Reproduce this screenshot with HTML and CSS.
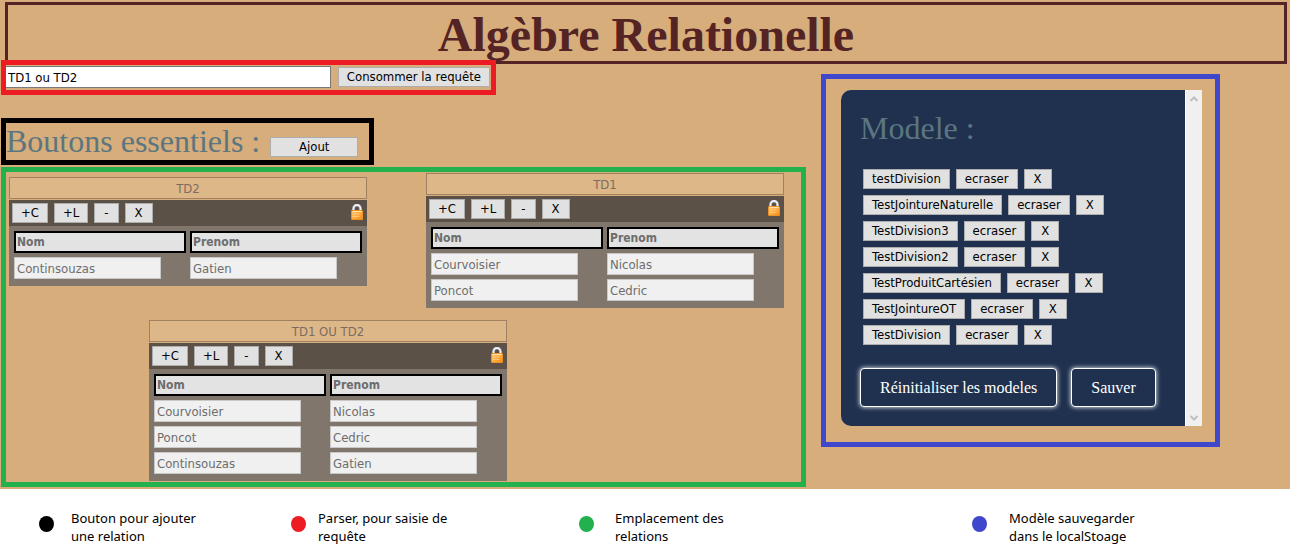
FILE: index.html
```
<!DOCTYPE html>
<html lang="fr">
<head>
<meta charset="utf-8">
<title>Algèbre Relationelle</title>
<link rel="stylesheet" href="styles.css">
</head>
<body>
<svg class="defs" aria-hidden="true">
  <defs>
    <linearGradient id="brass" x1="0" y1="0" x2="1" y2="1">
      <stop offset="0" stop-color="#ffc878"/>
      <stop offset="0.5" stop-color="#ffae45"/>
      <stop offset="1" stop-color="#f58a10"/>
    </linearGradient>
    <symbol id="lock" viewBox="0 0 12 16">
      <path d="M2.500 8V4.500a3.500 3.500 0 0 1 7 0V8" fill="none" stroke="#8f8f90" stroke-width="3"/>
      <path d="M2.500 8V4.500a3.500 3.500 0 0 1 7 0V8" fill="none" stroke="#eef1f6" stroke-width="1.800"/>
      <rect x="0.500" y="6.500" width="11" height="9" rx="0.500" fill="url(#brass)" stroke="#ee9226"/>
      <path d="M1.500 7.500h9" stroke="#ffe0a8"/>
      <path d="M1.500 10h7M1.500 12.500h7" stroke="#ffd596" stroke-opacity="0.600"/>
    </symbol>
  </defs>
</svg>
<div class="app">
  <header class="banner"><h1>Algèbre Relationelle</h1></header>
  <main class="columns">
    <div class="work">
      <form class="frame query">
        <input class="query-text" type="text" aria-label="Requête" value="TD1 ou TD2">
        <button class="btn" type="button">Consommer la requête</button>
      </form>
      <section class="frame essentials">
        <h2>Boutons essentiels :</h2>
        <button class="btn btn-wide" type="button">Ajout</button>
      </section>
      <section class="frame canvas" aria-label="Relations">
        <article class="relation td2">
          <input class="name" type="text" aria-label="Nom de la relation" value="TD2" disabled>
          <div class="tools">
            <button class="btn" type="button">+C</button><button class="btn" type="button">+L</button><button class="btn btn-sign" type="button">-</button><button class="btn btn-sign" type="button">X</button>
            <svg class="lock" role="img" aria-label="Verrou"><use href="#lock"/></svg>
          </div>
          <table>
            <tr><th><input type="text" aria-label="Colonne 1" value="Nom" disabled></th><th><input type="text" aria-label="Colonne 2" value="Prenom" disabled></th></tr>
            <tr><td><input type="text" aria-label="Nom" value="Continsouzas" disabled></td><td><input type="text" aria-label="Prenom" value="Gatien" disabled></td></tr>
          </table>
        </article>
        <article class="relation td1">
          <input class="name" type="text" aria-label="Nom de la relation" value="TD1" disabled>
          <div class="tools">
            <button class="btn" type="button">+C</button><button class="btn" type="button">+L</button><button class="btn btn-sign" type="button">-</button><button class="btn btn-sign" type="button">X</button>
            <svg class="lock" role="img" aria-label="Verrou"><use href="#lock"/></svg>
          </div>
          <table>
            <tr><th><input type="text" aria-label="Colonne 1" value="Nom" disabled></th><th><input type="text" aria-label="Colonne 2" value="Prenom" disabled></th></tr>
            <tr><td><input type="text" aria-label="Nom" value="Courvoisier" disabled></td><td><input type="text" aria-label="Prenom" value="Nicolas" disabled></td></tr>
            <tr><td><input type="text" aria-label="Nom" value="Poncot" disabled></td><td><input type="text" aria-label="Prenom" value="Cedric" disabled></td></tr>
          </table>
        </article>
        <article class="relation union">
          <input class="name" type="text" aria-label="Nom de la relation" value="TD1 OU TD2" disabled>
          <div class="tools">
            <button class="btn" type="button">+C</button><button class="btn" type="button">+L</button><button class="btn btn-sign" type="button">-</button><button class="btn btn-sign" type="button">X</button>
            <svg class="lock" role="img" aria-label="Verrou"><use href="#lock"/></svg>
          </div>
          <table>
            <tr><th><input type="text" aria-label="Colonne 1" value="Nom" disabled></th><th><input type="text" aria-label="Colonne 2" value="Prenom" disabled></th></tr>
            <tr><td><input type="text" aria-label="Nom" value="Courvoisier" disabled></td><td><input type="text" aria-label="Prenom" value="Nicolas" disabled></td></tr>
            <tr><td><input type="text" aria-label="Nom" value="Poncot" disabled></td><td><input type="text" aria-label="Prenom" value="Cedric" disabled></td></tr>
            <tr><td><input type="text" aria-label="Nom" value="Continsouzas" disabled></td><td><input type="text" aria-label="Prenom" value="Gatien" disabled></td></tr>
          </table>
        </article>
      </section>
    </div>
    <aside class="frame models">
      <div class="panel">
        <div class="panel-body">
          <h2>Modele :</h2>
          <ul class="model-list">
            <li><button class="btn" type="button">testDivision</button><button class="btn" type="button">ecraser</button><button class="btn btn-sign" type="button">X</button></li>
            <li><button class="btn" type="button">TestJointureNaturelle</button><button class="btn" type="button">ecraser</button><button class="btn btn-sign" type="button">X</button></li>
            <li><button class="btn" type="button">TestDivision3</button><button class="btn" type="button">ecraser</button><button class="btn btn-sign" type="button">X</button></li>
            <li><button class="btn" type="button">TestDivision2</button><button class="btn" type="button">ecraser</button><button class="btn btn-sign" type="button">X</button></li>
            <li><button class="btn" type="button">TestProduitCartésien</button><button class="btn" type="button">ecraser</button><button class="btn btn-sign" type="button">X</button></li>
            <li><button class="btn" type="button">TestJointureOT</button><button class="btn" type="button">ecraser</button><button class="btn btn-sign" type="button">X</button></li>
            <li><button class="btn" type="button">TestDivision</button><button class="btn" type="button">ecraser</button><button class="btn btn-sign" type="button">X</button></li>
          </ul>
          <div class="actions">
            <button class="glow" type="button">Réinitialiser les modeles</button>
            <button class="glow" type="button">Sauver</button>
          </div>
        </div>
        <div class="scrollbar" aria-hidden="true">
          <svg viewBox="0 0 8 6"><path d="M0.500 5l3.500-3.500 3.500 3.500"/></svg>
          <svg viewBox="0 0 8 6"><path d="M0.500 1l3.500 3.500 3.500-3.500"/></svg>
        </div>
      </div>
    </aside>
  </main>
</div>
<footer class="legend">
  <span class="dot black"></span><p>Bouton pour ajouter<br>une relation</p>
  <span class="dot red"></span><p>Parser, pour saisie de<br>requête</p>
  <span class="dot green"></span><p>Emplacement des<br>relations</p>
  <span class="dot blue"></span><p>Modèle sauvegarder<br>dans le localStoage</p>
</footer>
</body>
</html>
```
FILE: styles.css
```
* {
  box-sizing: border-box;
}

body {
  margin: 0;
  background: #fff;
  color: #000;
  font-family: "Liberation Serif", "Times New Roman", serif;
}

h1,
h2,
p,
ul {
  margin: 0;
  padding: 0;
}

h2 {
  color: #5b7680;
  font-size: 32px;
  font-weight: 400;
  line-height: 37px;
}

input,
.btn {
  font-family: "DejaVu Sans Condensed", "DejaVu Sans", Tahoma, sans-serif;
  font-size: 13px;
}

.defs {
  position: absolute;
  width: 0;
  height: 0;
}

.app {
  padding: 2px 0;
  background: #d6ad7b;
}

.banner {
  margin: 0 3px 0 5px;
  padding-top: 4px;
  border: 3px solid #542324;
  color: #542324;
  text-align: center;
}

.banner h1 {
  font-size: 48px;
  line-height: 52px;
}

.columns {
  display: grid;
  grid-template-columns: minmax(0, 805fr) minmax(0, 399fr);
  align-items: start;
  gap: 15px;
  margin-top: -4px;
  padding: 0 70px 0 1px;
}

.frame {
  position: relative;
  border: 5px solid;
}

.work {
  display: flex;
  flex-direction: column;
  align-items: flex-start;
}

.btn {
  height: 20px;
  padding: 0 8px;
  border: 1px solid #adadad;
  background: #e1e1e1;
  color: #000;
  line-height: 18px;
  white-space: nowrap;
}

.btn-sign {
  padding: 0 9px;
}

.btn-wide {
  width: 88px;
}

.query {
  display: flex;
  align-items: center;
  gap: 7px;
  width: 495px;
  padding: 1px 1px 2px 0;
  border-color: #ed1c24;
}

.query-text {
  flex: 1;
  min-width: 0;
  height: 22px;
  padding: 0 2px;
  border: 1px solid #7a7a7a;
  border-left: 0;
  background: #fff;
}

.essentials {
  display: flex;
  align-items: flex-end;
  gap: 10px;
  margin: 23px 0 2px;
  padding-right: 11px;
  border-color: #000;
}

.essentials .btn {
  margin-bottom: 3px;
}

.canvas {
  width: 100%;
  height: 320px;
  border-color: #22b14c;
}

.relation {
  position: absolute;
  width: 358px;
  background: #80766c;
}

.td2 {
  left: 3px;
  top: 5px;
}

.td1 {
  left: 420px;
  top: 1px;
}

.union {
  left: 143px;
  top: 148px;
}

.relation input {
  display: block;
  width: 147px;
  height: 22px;
  padding: 0 2px;
  border: 1px solid #c8c8c8;
  border-radius: 0;
  background: #f0f0f0;
  color: #6d6d6d;
}

.relation .name {
  width: 100%;
  border-color: #a08262;
  background: #deb788;
  color: #7c6c60;
  text-align: center;
}

.relation th input {
  width: 172px;
  padding: 0 1px;
  border: 2px solid #000;
  background: #e3e3e3;
  font-size: 12px;
  font-weight: 700;
}

.tools {
  display: flex;
  align-items: center;
  gap: 6px;
  height: 27px;
  padding: 0 4px 0 3px;
  border-top: 1px solid #d6ad7b;
  background: #5b5147;
}

.lock {
  width: 12px;
  height: 16px;
  margin: 0 0 2px auto;
}

.relation table {
  padding: 1px 1px 3px;
  border-spacing: 4px;
}

.relation th,
.relation td {
  padding: 0;
}

.models {
  margin-top: 14px;
  padding: 11px 13px 16px 15px;
  border-color: #3f48cc;
}

.panel {
  display: flex;
  overflow: hidden;
  border-radius: 10px 0 0 10px;
  background: #1f314f;
}

.panel-body {
  flex: 1;
  min-width: 0;
  padding: 20px 19px 19px;
}

.model-list {
  display: grid;
  gap: 6px;
  padding: 22px 3px 23px;
  list-style: none;
}

.model-list li {
  display: flex;
  gap: 6px;
}

.actions {
  display: flex;
  gap: 14px;
}

.glow {
  height: 39px;
  padding: 0 19px;
  border: 1px solid #fff;
  border-radius: 4px;
  background: #1f314f;
  box-shadow: 0 0 5px #fff;
  color: #fff;
  font-family: inherit;
  font-size: 16px;
  white-space: nowrap;
}

.scrollbar {
  display: flex;
  flex-direction: column;
  justify-content: space-between;
  align-items: center;
  width: 17px;
  padding: 6px 0 5px;
  border-left: 1px solid #fff;
  background: #f0f0f0;
}

.scrollbar svg {
  width: 8px;
  height: 6px;
  fill: none;
  stroke: #bfbfbf;
  stroke-width: 2;
}

.legend {
  display: grid;
  grid-template-columns: 32fr 220fr 27fr 261fr 36fr 357fr 37fr 281fr;
  align-items: start;
  padding: 20px 0 10px 39px;
  font-family: "Noto Sans", "Open Sans", sans-serif;
  font-size: 13px;
  line-height: 18px;
}

.dot {
  width: 15px;
  height: 16px;
  margin-top: 7px;
  border-radius: 50%;
}

.black {
  background: #000;
}

.red {
  background: #ed1c24;
}

.green {
  background: #22b14c;
}

.blue {
  background: #3f48cc;
}
```
